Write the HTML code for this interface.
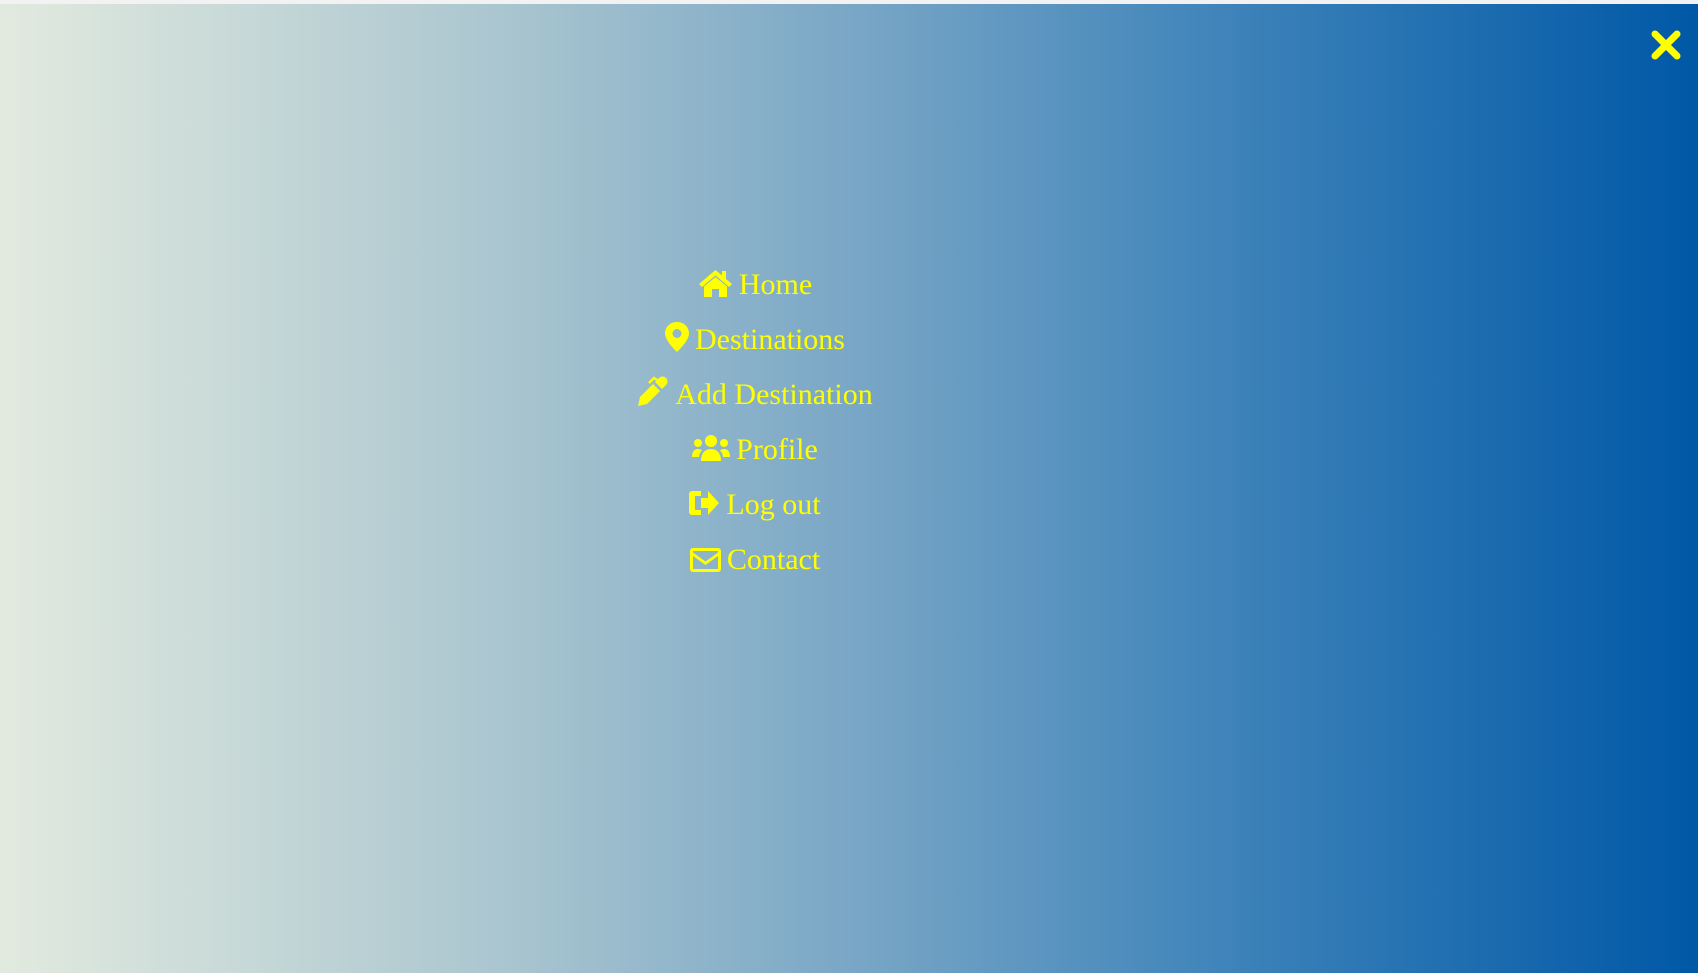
<!DOCTYPE html>
<html><head><meta charset="utf-8"><style>
html,body{margin:0;padding:0;width:1698px;height:973px;overflow:hidden}
body{background:#f2f2f2}
.bg{position:absolute;left:0;top:4px;width:1698px;height:969px;background:linear-gradient(to right,#e2eadf 0%,#a9c5cf 30%,#7aa7c6 50%,#3f84ba 72%,#0058a6 100%)}
.close{position:absolute;left:1650px;top:29px;width:32px;height:32px}
nav{position:absolute;left:0;width:1510px;top:263px;text-align:center;font-family:"Liberation Serif",serif;font-size:30px;color:#ffff00}
nav div{height:55px;line-height:44px;white-space:nowrap}
nav svg{vertical-align:-3px;fill:#ffff00;margin-right:6px}
</style></head><body>
<div class="bg"></div>
<svg class="close" viewBox="0 0 32 32"><path d="M5 5L27 27M27 5L5 27" stroke="#ffff00" stroke-width="7" stroke-linecap="round"/></svg>
<nav>
<div><svg width="35" height="28" viewBox="0 0 35 28"><path d="M17.5 1L1 15l3 3 13.5-11.5L31 18l3-3-6-5V2h-4v4.5z"/><path d="M6 17.5L17.5 8 29 17.5V28h-8v-8h-7v8H6z"/></svg>Home</div>
<div><svg width="24" height="30" viewBox="0 0 24 30"><path d="M12 0C5 0 0 5 0 11.5 0 19 12 30 12 30S24 19 24 11.5C24 5 19 0 12 0zm0 7a4.5 4.5 0 110 9 4.5 4.5 0 010-9z" fill-rule="evenodd"/></svg>Destinations</div>
<div><svg width="32" height="32" viewBox="0 0 32 32"><path d="M1 31l2-9L16 9l7 7L10 29zM18 7l4-4c2-2 5-2 7 0s2 5 0 7l-4 4z"/><path d="M20 5l-3-2-5 5" stroke="#ffff00" stroke-width="2.5" fill="none"/></svg>Add Destination</div>
<div><svg width="38" height="28" viewBox="0 0 38 28"><circle cx="19" cy="7" r="6"/><circle cx="6" cy="9" r="4"/><circle cx="32" cy="9" r="4"/><path d="M9 27c0-8 4-12 10-12s10 4 10 12zM0 23c0-5 2-8 6-8 2 0 3 .5 4 1.5-2 2-3 4-3 6.5zM38 23c0-5-2-8-6-8-2 0-3 .5-4 1.5 2 2 3 4 3 6.5z"/></svg>Profile</div>
<div><svg width="31" height="28" viewBox="0 0 31 28"><path d="M3 2h9v5H6v14h6v5H3a3 3 0 01-3-3V5a3 3 0 013-3zM12 9h7V2l11 12-11 12v-7h-7z"/></svg>Log out</div>
<div><svg width="31" height="24" viewBox="0 0 31 24"><path d="M3 0h25a3 3 0 013 3v18a3 3 0 01-3 3H3a3 3 0 01-3-3V3a3 3 0 013-3zm0 3v1.5l12.5 9L28 4.5V3zm0 5v13h25V8l-12.5 9z" fill-rule="evenodd"/></svg>Contact</div>
</nav>
</body></html>
